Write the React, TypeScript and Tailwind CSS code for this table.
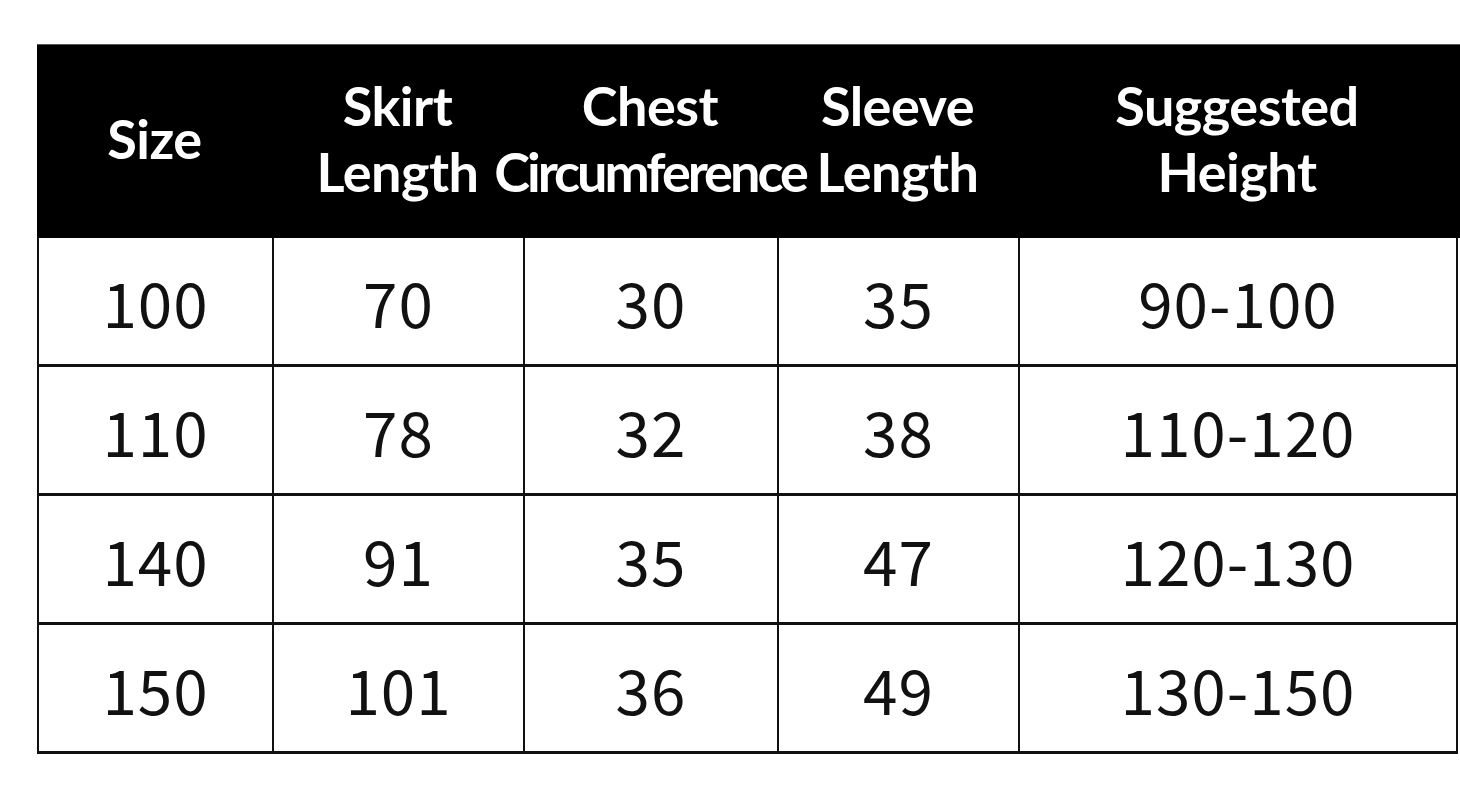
import React from 'react';

const cols = [
  { key: 'size', label: ['Size'], w: 'w-[235px]' },
  { key: 'skirt', label: ['Skirt', 'Length'], w: 'w-[251px]' },
  { key: 'chest', label: ['Chest', 'Circumference'], w: 'w-[254px]' },
  { key: 'sleeve', label: ['Sleeve', 'Length'], w: 'w-[241px]' },
  { key: 'height', label: ['Suggested', 'Height'], w: 'w-[438px]' },
];

const rows = [
  ['100', '70', '30', '35', '90-100'],
  ['110', '78', '32', '38', '110-120'],
  ['140', '91', '35', '47', '120-130'],
  ['150', '101', '36', '49', '130-150'],
];

export default function App() {
  return (
    <div
      className="w-[1460px] h-[800px] bg-white overflow-hidden pt-[44px] pl-[37px]"
      style={{ fontFamily: '"Noto Sans CJK SC", "Open Sans", sans-serif' }}
    >
      {/* header band */}
      <div
        className="flex h-[194px] w-[1423px] bg-black border-t border-[#555]"
        style={{ fontFamily: 'Lato, "Open Sans", sans-serif' }}
      >
        {cols.map((c) => (
          <div key={c.key} className={`${c.w} shrink-0 flex flex-col items-center justify-center pb-[5px]`}>
            {c.label.map((l) => (
              <span
                key={l}
                className={`block text-white font-bold text-[54px] leading-[66px] whitespace-nowrap ${
                  l === 'Circumference' ? 'tracking-[-3px]' : 'tracking-[-0.5px]'
                }`}
              >
                {l}
              </span>
            ))}
          </div>
        ))}
      </div>

      {/* body */}
      <div className="w-[1421px] border-l-2 border-[#111]">
        {rows.map((r, i) => (
          <div key={i} className="flex h-[129px] border-b-[3px] border-[#111]">
            {r.map((v, j) => (
              <div
                key={j}
                className={`${cols[j].w} shrink-0 border-r-2 border-[#111] flex items-center justify-center text-[62px] text-[#111] tracking-[1px]`}
              >
                {v}
              </div>
            ))}
          </div>
        ))}
      </div>
    </div>
  );
}
